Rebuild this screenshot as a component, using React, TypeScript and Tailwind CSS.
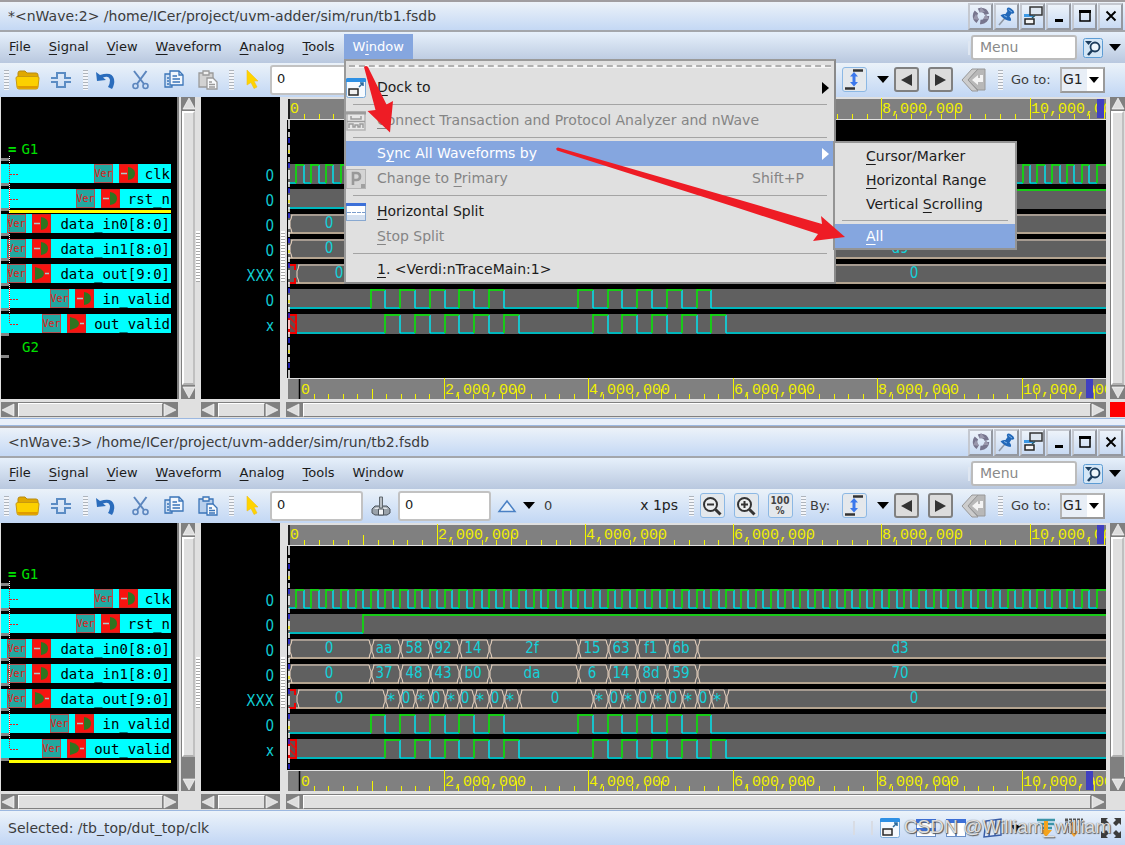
import React from "react";

/* ---------- signal data ---------- */

type Signal = { name: string; value: string; dir: "in" | "out"; wide?: boolean };

const SIGNALS: Signal[] = [
  { name: "clk", value: "0", dir: "in" },
  { name: "rst_n", value: "0", dir: "in" },
  { name: "data_in0[8:0]", value: "0", dir: "in", wide: true },
  { name: "data_in1[8:0]", value: "0", dir: "in", wide: true },
  { name: "data_out[9:0]", value: "XXX", dir: "out", wide: true },
  { name: "in_valid", value: "0", dir: "in" },
  { name: "out_valid", value: "x", dir: "out" },
];

const ROW = 25;
const HALF = 7.41;
/* x coordinate of the k-th half clock period */
const at = (k: number) => Math.round(2 + HALF * k);

const BUS_EDGES = [0, 11, 15, 19, 23, 27, 39, 43, 47, 51, 55];
const IN0 = ["0", "aa", "58", "92", "14", "2f", "15", "63", "f1", "6b", "d3"];
const OUT_EDGES = [1, 13, 15, 17, 19, 21, 23, 25, 27, 29, 31, 41, 43, 45, 47, 49, 51, 53, 55, 57, 59];
const OUT = ["0", "*", "0", "*", "0", "*", "0", "*", "0", "*", "0", "*", "0", "*", "0", "*", "0", "*", "0", "*", "0"];
const CLK = Array.from({ length: 109 }, (_, i) => i + 1);
const IN_VALID = [11, 13, 15, 17, 19, 21, 23, 25, 27, 29, 39, 41, 43, 45, 47, 49, 51, 53, 55, 57];
const OUT_VALID = IN_VALID.map((k) => k + 2);

/* Labels in this x range are skipped while the Window menu covers it. */
const isCovered = (x: number, covered?: boolean) => Boolean(covered) && x > 56 && x < 548;

/* ---------- wave drawing ---------- */

function Digital({ y, edges, start = 2 }: { y: number; edges: number[]; start?: number }) {
  let high = "";
  let low = "";
  let fall = "";
  let x = start;
  let level = 0;
  edges.forEach((k) => {
    const nx = at(k);
    if (level) {
      high += `M${x} ${y + 1}H${nx}`;
      fall += `M${nx} ${y + 1}V${y + 19}`;
    } else {
      low += `M${x} ${y + 19}H${nx}`;
      high += `M${nx} ${y + 19}V${y}`;
    }
    level = 1 - level;
    x = nx;
  });
  if (level) high += `M${x} ${y + 1}H4000`;
  else low += `M${x} ${y + 19}H4000`;
  return (
    <g fill="none" strokeWidth="1.5">
      <path d={low} stroke="#00b6bc" strokeWidth="2" />
      <path d={fall} stroke="#00e4ee" />
      <path d={high} stroke="#00ee00" />
    </g>
  );
}

function Bus({ y, edges, values, covered }: { y: number; edges: number[]; values: string[]; covered?: boolean }) {
  return (
    <g>
      {values.map((v, i) => {
        const last = i === values.length - 1;
        const x0 = at(edges[i]);
        const x1 = last ? 4000 : at(edges[i + 1]) - 1;
        const mid = Math.round(last ? (x0 + 815) / 2 : (x0 + x1) / 2 - 1);
        return (
          <g key={i}>
            <path d={`M${x0} ${y + 19}H${x1}`} stroke="#b4a490" strokeWidth="2" fill="none" />
            <path
              d={`M${x0 + 3} ${y + 1}L${x0 + 2} ${y + 5}L${x0 + 1} ${y + 7}V${y + 13}L${x0 + 2} ${y + 15}L${x0 + 3} ${y + 19}M${x0 + 2} ${y + 1}H${x1 - 1}L${x1} ${y + 5}L${x1 + 1} ${y + 7}V${y + 13}L${x1} ${y + 15}L${x1 - 1} ${y + 19}`}
              stroke="#ecd6c2"
              fill="none"
            />
            {!isCovered(mid, covered) && (
              <text
                x={mid}
                y={v === "*" ? y + 17 : y + 14}
                textAnchor="middle"
                fill="#14d2da"
                fontSize={v === "*" ? 18 : 15}
                fontFamily="'DejaVu Sans Condensed','Open Sans',sans-serif"
              >
                {v}
              </text>
            )}
          </g>
        );
      })}
    </g>
  );
}

function Waves({ top, in1Last, covered }: { top: number; in1Last: string; covered?: boolean }) {
  const y = (i: number) => top + i * ROW;
  const in1 = ["0", "37", "48", "43", "b0", "da", "6", "14", "8d", "59", in1Last];
  return (
    <svg className="block min-h-0 w-full flex-1 bg-black" role="img" aria-label="Waveforms">
      {SIGNALS.map((s, i) => (
        <rect key={s.name} x="1" y={y(i)} width="100%" height="20" fill="#606060" />
      ))}
      <Digital y={y(0)} edges={CLK} />
      <Digital y={y(1)} edges={[10]} />
      <Bus y={y(2)} edges={BUS_EDGES} values={IN0} covered={covered} />
      <Bus y={y(3)} edges={BUS_EDGES} values={in1} covered={covered} />
      <Bus y={y(4)} edges={OUT_EDGES} values={OUT} covered={covered} />
      <path
        d={`M2 ${y(4) + 1}H8V${y(4) + 6}M8 ${y(4) + 14}V${y(4) + 19}H2`}
        stroke="#f00000"
        strokeWidth="2"
        fill="none"
      />
      <Digital y={y(5)} edges={IN_VALID} />
      <Digital y={y(6)} edges={OUT_VALID} start={10} />
      <rect x="2" y={y(6) + 1} width="7" height="18" fill="#605050" stroke="#f00000" strokeWidth="2" />
      <path
        d={`M2 ${y(6) + 3}L9 ${y(6) + 10}M2 ${y(6) + 10}L9 ${y(6) + 17}`}
        stroke="#e01010"
        strokeWidth="1.5"
      />
      <g strokeWidth="1.5" fill="none">
        <path d="M2 0V2000" stroke="#ffffff" strokeDasharray="9 3 5 8" />
        <path d="M2 0V2000" stroke="#2020e0" strokeDasharray="5 20" strokeDashoffset="7" />
        <path d="M2 0V2000" stroke="#e8e000" strokeDasharray="3 47" strokeDashoffset="20" />
      </g>
    </svg>
  );
}

function Ruler({ place, covered }: { place: "top" | "bottom"; covered?: boolean }) {
  const isTop = place === "top";
  const start = isTop ? 2 : 12.5;
  const step = isTop ? 14.81 : 14.44;
  const base = isTop ? 22 : 21;
  const y0 = isTop ? 2 : 1;
  const ticks = Array.from({ length: 160 }, (_, i) => i);
  const labels = ["0", "2,000,000", "4,000,000", "6,000,000", "8,000,000", "10,000,000"];
  const block = isTop ? 810 : 799;
  return (
    <svg
      className={isTop ? "block h-[23px] w-full shrink-0" : "block h-[21px] w-full shrink-0"}
      role="img"
      aria-label="Time ruler"
    >
      <rect width="100%" height="100%" fill="#e0e0e0" />
      <rect x="1" y={y0} width="100%" height={base - y0} fill="#808080" />
      <g stroke="#f4f400" strokeWidth="1">
        {ticks.map((i) => {
          if (i === 0) return null;
          const x = Math.round(start + i * step) + 0.5;
          const h = i % 10 === 0 ? 21 : i % 5 === 0 ? 10 : 5;
          return <path key={i} d={`M${x} ${base - h}V${base}`} />;
        })}
      </g>
      <path d={`M${start} ${y0}V${base}`} stroke="#000" strokeWidth="1.5" />
      {labels.map((t, i) => {
        const x = Math.round(start + i * 10 * step) + 1;
        if (isCovered(x, covered)) return null;
        return (
          <text
            key={t}
            x={x}
            y={isTop ? 16 : 16}
            fill="#f0f000"
            fontSize="15"
            fontFamily="'Liberation Mono','DejaVu Sans Mono',monospace"
          >
            {t}
          </text>
        );
      })}
      <rect x={block} y={y0} width="7" height={base - y0 - 1} fill="#4040c0" />
    </svg>
  );
}

/* ---------- scroll bars ---------- */

function Arrow({ to }: { to: "up" | "down" | "left" | "right" }) {
  const d = {
    up: "M7 1L13 12H1Z",
    down: "M1 2H13L7 13Z",
    left: "M1 7L13 1V13Z",
    right: "M13 7L1 1V13Z",
  }[to];
  const horizontal = to === "left" || to === "right";
  return (
    <button
      type="button"
      aria-label={`Scroll ${to}`}
      className={horizontal ? "h-[14px] w-[15px] shrink-0 bg-[#808080]" : "h-[14px] w-[14px] shrink-0 bg-[#808080]"}
    >
      <svg className="block h-[14px] w-[14px]" viewBox="0 0 14 14">
        <path d={d} fill="#dedede" stroke="#fff" strokeWidth="0.6" />
      </svg>
    </button>
  );
}

function VScroll({ trough }: { trough?: boolean }) {
  return (
    <div className="flex w-[14px] shrink-0 flex-col border-l border-[#808080] bg-[#808080]">
      <Arrow to="up" />
      <div className="flex-1 border-2 border-t-white border-r-[#c0c0c0] border-b-[#b0b0b0] border-l-white bg-[#e0e0e0]" />
      {trough && <div className="h-[20px]" />}
      <Arrow to="down" />
    </div>
  );
}

function HScroll() {
  return (
    <div className="flex h-[15px] w-full border-t border-[#808080] bg-[#808080]">
      <Arrow to="left" />
      <div className="ml-[2px] flex-1 border border-t-white border-r-[#808080] border-b-[#808080] border-l-white bg-[#e0e0e0]" />
      <Arrow to="right" />
    </div>
  );
}

function Splitter({ className }: { className: string }) {
  return (
    <div className={`flex shrink-0 items-start bg-[#e0e0e0] pl-px pt-[134px] ${className}`}>
      <div className="h-[51px] w-[4px] bg-[repeating-linear-gradient(180deg,#ffffff_0px,#ffffff_2px,#a8a8a8_2px,#a8a8a8_3px)]" />
    </div>
  );
}

/* ---------- signal list ---------- */

function DirIcon({ dir }: { dir: "in" | "out" }) {
  return (
    <svg className="h-[19px] w-[19px] shrink-0" viewBox="0 0 19 19">
      <rect width="19" height="19" fill="#f81410" />
      <rect x="0.5" y="0.5" width="18" height="18" fill="none" stroke="#a83030" strokeDasharray="1 1" />
      {dir === "in" ? (
        <>
          <path d="M9 3Q16 4 16 9.5T9 16Z" fill="#2f7420" />
          <path d="M2 9.500H8" stroke="#b0c8c8" strokeWidth="1.500" />
        </>
      ) : (
        <>
          <path d="M3 3Q12 5 12 9.5T3 16Z" fill="#2f7420" />
          <path d="M13 9.500H17" stroke="#b0c8c8" strokeWidth="1.500" />
        </>
      )}
    </svg>
  );
}

function SignalRow({ s, marked }: { s: Signal; marked: boolean }) {
  return (
    <li className="h-[25px]">
      <div className="mr-[6px] flex h-[19px] items-center justify-end gap-[6px] overflow-hidden bg-[#00ffff] pr-px">
        <span className="flex h-[19px] w-[19px] shrink-0 items-center justify-center border border-[#b05050] bg-[#22a8a0] font-['DejaVu_Sans_Mono',monospace] text-[10px] leading-none text-[#e01818]">
          Ver
        </span>
        <DirIcon dir={s.dir} />
        <span
          className="shrink-0 whitespace-nowrap text-right font-['DejaVu_Sans_Mono',monospace] text-[14px] leading-[18px] text-black"
          style={{ width: Math.round(s.name.length * 8.7) }}
        >
          {s.name}
        </span>
      </div>
      {marked && <div className="mr-[6px] ml-[8px] mt-[2px] h-[3px] bg-[#ffff00]" />}
    </li>
  );
}

function SignalPane({ headClass, top, mark, group2 }: { headClass: string; top: number; mark: number; group2?: boolean }) {
  const stubs = Array.from({ length: 8 }, (_, i) => top - 6 + i * ROW);
  return (
    <div className="relative ml-px w-[176px] shrink-0 overflow-hidden bg-black font-['DejaVu_Sans_Mono',monospace] text-[14px] leading-[17px] text-[#00e000]">
      <div className={`flex items-end gap-[5px] pb-[6px] pl-[7px] ${headClass}`}>
        <span className="font-bold">=</span>
        <span>G1</span>
      </div>
      <ul>
        {SIGNALS.map((s, i) => (
          <SignalRow key={s.name} s={s} marked={i === mark} />
        ))}
      </ul>
      {group2 && <div className="pl-[21px]">G2</div>}
      <svg className="pointer-events-none absolute inset-0 h-full w-full">
        {stubs.map((y) => (
          <rect key={y} x="0" y={y} width="8" height="3" fill="#888" />
        ))}
        {group2 && <rect x="0" y={top + 191} width="8" height="3" fill="#888" />}
        <path d={`M8.5 ${top - 8}V${top + 160}`} stroke="#fff" strokeDasharray="1 1" />
        {SIGNALS.map((s, i) => {
          const y = top + i * ROW;
          return (
            <g key={s.name} stroke="#e02020" strokeDasharray="1 1">
              <path d={`M8.5 ${y}V${i === 6 ? y + 10 : y + 19}`} />
              {!s.wide && <path d={`M9 ${y + 10.5}H17`} strokeDasharray="2 1" />}
            </g>
          );
        })}
      </svg>
    </div>
  );
}

/* ---------- icons ---------- */

const Caret = () => (
  <svg className="h-[7px] w-[12px] shrink-0" viewBox="0 0 12 7">
    <path d="M0 0H12L6 7Z" fill="#000" />
  </svg>
);

const Grip = () => (
  <span className="h-[20px] w-[5px] bg-[repeating-linear-gradient(180deg,#aeb4bc_0px,#aeb4bc_1px,#f4f6fa_1px,#f4f6fa_3px)]" />
);

const FolderIcon = () => (
  <svg className="h-[20px] w-[25px]" viewBox="0 0 25 20">
    <path d="M3 3Q3 1 5 1H10L12 3H21Q23 3 23 5V8H3Z" fill="#e0a800" stroke="#b88a10" />
    <path d="M1 8Q1 6.500 3 6.500H22Q24 6.500 24 8L23 17Q23 19 21 19H4Q2 19 2 17Z" fill="#fcd000" stroke="#c89a10" />
    <path d="M2 16H23L22 18.500H4Z" fill="#e09c00" />
  </svg>
);

const PulseIcon = () => (
  <svg className="h-[18px] w-[22px]" viewBox="0 0 22 18" fill="none" stroke="#5b8cc4" strokeWidth="2">
    <path d="M1 7H7V2H15V7H21" />
    <path d="M1 11H7V16H15V11H21" />
  </svg>
);

const UndoIcon = () => (
  <svg className="h-[18px] w-[20px]" viewBox="0 0 20 18">
    <path d="M0 1L1 10L10 9L7 6.500Q13 4 14 9Q14 13 12 16L16 18Q19 13 18 8Q16 0 4 4Z" fill="#2a6cbc" />
  </svg>
);

const ScissorsIcon = () => (
  <svg className="h-[20px] w-[17px]" viewBox="0 0 17 20" fill="none" stroke="#5c86be" strokeWidth="2">
    <path d="M2 1L12 14M14.500 1L5 14" />
    <circle cx="3.500" cy="16" r="2.500" strokeWidth="1.600" />
    <circle cx="13.500" cy="16" r="2.500" strokeWidth="1.600" />
  </svg>
);

const CopyIcon = () => (
  <svg className="h-[20px] w-[20px]" viewBox="0 0 20 20" stroke="#3a74b8" strokeWidth="1.300">
    <path d="M1 4H8V17H1Z" fill="#cfe0f4" />
    <path d="M6 1H15L19 5V15H6Z" fill="#f2f7fd" />
    <path d="M8.500 6H13M8.500 9H16M8.500 12H16M3 8H5M3 11H5M3 14H5" />
    <path d="M15 1V5H19" fill="none" />
  </svg>
);

const PasteIcon = ({ off }: { off?: boolean }) => (
  <svg className="h-[20px] w-[20px]" viewBox="0 0 20 20" stroke={off ? "#9a9a9a" : "#3a74b8"} strokeWidth="1.300">
    <path d="M1 3H15V17H1Z" fill={off ? "#d2d2d2" : "#b8cfec"} />
    <path d="M5 1H11V5H5Z" fill="#f0f0f0" />
    <path d="M9 8H15L19 12V19H9Z" fill="#f8fafc" />
    <path d="M11 12H14M11 14.500H17M11 17H17" />
  </svg>
);

const PointerIcon = () => (
  <svg className="h-[19px] w-[13px]" viewBox="0 0 13 19">
    <path d="M1 0L12 11H8L11 17L8 18.500L5 12.500L1 15Z" fill="#ffd400" stroke="#f0c020" strokeWidth="0.600" />
  </svg>
);

const MarkerIcon = () => (
  <svg className="h-[20px] w-[20px]" viewBox="0 0 20 20">
    <path d="M1 13L4 10H16L19 13V17L16 19H4L1 17Z" fill="#9aa2aa" stroke="#4c545c" />
    <path d="M3 13L5 11.500H15L17 13Z" fill="#e2e6ea" />
    <path d="M8.500 1H11.500V12H8.500Z" fill="#b8bec4" stroke="#60686e" />
    <path d="M7.500 13H12.500V19H7.500Z" fill="#f2f4f6" stroke="#4c545c" />
  </svg>
);

const TriangleIcon = () => (
  <svg className="h-[14px] w-[20px]" viewBox="0 0 20 14">
    <path d="M10 2L18 12.500H2Z" fill="#eaf2fb" stroke="#4a80c4" strokeWidth="1.500" />
  </svg>
);

const ZoomIcon = ({ plus }: { plus?: boolean }) => (
  <svg className="h-[20px] w-[20px]" viewBox="0 0 20 20" fill="none" stroke="#333">
    <circle cx="8.500" cy="8.500" r="6.500" strokeWidth="2" fill="#eceef0" />
    <path d="M13.500 13.500L18.500 18.500" strokeWidth="3" />
    <path d={plus ? "M5 8.500H12M8.500 5V12" : "M5 8.500H12"} strokeWidth="2" />
  </svg>
);

const EdgeIcon = () => (
  <svg className="h-[21px] w-[20px]" viewBox="0 0 20 21">
    <path d="M9 1.500H19M1 19.500H11" stroke="#333" strokeWidth="2.600" />
    <path d="M10 3L14 7.500H11.500V13H14L10 17.500L6 13H8.500V7.500H6Z" fill="#3c78ec" />
  </svg>
);

const BackIcon = () => (
  <svg className="h-[24px] w-[26px]" viewBox="0 0 26 24" fill="#cccccc" stroke="#989898">
    <path d="M11 1H17L7 12L17 23H11L1 12Z" />
    <path d="M17 1H24V22H17L7 12Z" fill="#b8b8b8" />
    <path d="M22 7V14H17V17L11 12L17 7V10H19V7Z" fill="#f4f4f4" stroke="none" />
  </svg>
);

const RecycleIcon = () => (
  <svg className="h-[18px] w-[18px]" viewBox="0 0 18 18">
    <circle cx="9" cy="9" r="6" fill="none" stroke="#77758e" strokeWidth="4.500" strokeDasharray="10 2.560" />
    <path d="M9 0L13 5H7ZM17 12L11 12L14 7ZM1 12L4 7L7 13Z" fill="#9997ac" />
  </svg>
);

const PinIcon = () => (
  <svg className="h-[19px] w-[17px]" viewBox="0 0 17 19">
    <path d="M7 11L1 18" stroke="#9098a4" strokeWidth="1.600" />
    <path d="M9 1.500Q10 -0.500 13 1.500Q17 4 16 6Q15 7 13.500 6.500L11.500 9.500Q14 12 12.500 14Q7 13.500 2.500 8.500Q4 6.500 7.500 7L9.500 4Q8.500 3 9 1.500Z" fill="#2268b8" />
    <path d="M10.500 2.500L14 5M6 8.500L9 10" stroke="#80b4ec" />
  </svg>
);

const DockIcon = () => (
  <svg className="h-[20px] w-[20px]" viewBox="0 0 20 20">
    <rect x="0.500" y="0.500" width="19" height="19" rx="2" fill="#f6fafe" stroke="#7aaad8" />
    <path d="M0 1Q0 0 2 0H18Q20 0 20 1V4H0Z" fill="#2e90e4" />
    <rect x="3" y="11" width="9" height="6" fill="#f0f0f0" stroke="#282828" strokeWidth="1.500" />
    <path d="M13 9L17 5M17 8V5H14" stroke="#2a6a9c" strokeWidth="1.500" fill="none" />
  </svg>
);

const UndockIcon = () => (
  <svg className="h-[20px] w-[20px]" viewBox="0 0 20 20">
    <rect x="1" y="8" width="12" height="11" fill="#dceaf8" />
    <path d="M1 8H10V11H1Z" fill="#3c98e4" />
    <rect x="2" y="13" width="9" height="5" fill="#f4f4f4" stroke="#222" strokeWidth="1.500" />
    <rect x="7" y="1" width="12" height="8" fill="#dde6f0" stroke="#333" strokeWidth="1.500" />
    <path d="M9 12L12 9.500" stroke="#256" strokeWidth="1.500" />
  </svg>
);

const SplitIcon = () => (
  <svg className="h-[20px] w-[20px]" viewBox="0 0 20 20">
    <rect x="0.500" y="1.500" width="19" height="17" fill="#fdfeff" stroke="#88a8d0" />
    <path d="M0 1H20V4H0Z" fill="#3c70d8" />
    <path d="M1 13H19V18H1Z" fill="#d4e0f0" />
    <path d="M1 10.500H19" stroke="#7a9ccc" strokeDasharray="4 1" />
  </svg>
);

const LinkIcon = () => (
  <svg className="h-[20px] w-[20px]" viewBox="0 0 20 20" fill="#e8e8e8" stroke="#9c9c9c" strokeWidth="1.500">
    <rect x="1" y="1" width="18" height="18" stroke="#b4b4b4" />
    <path d="M0 2H20" strokeWidth="3" />
    <path d="M5 5V8H15V5" fill="none" />
    <path d="M1 10.500H19" />
    <path d="M3 17V13H7V16H9V14H12V16H14V13H17V17" fill="none" />
  </svg>
);

const PrimaryIcon = () => (
  <svg className="h-[20px] w-[20px]" viewBox="0 0 20 20">
    <rect x="0.500" y="0.500" width="19" height="19" fill="#d4d4d4" stroke="#b4b4b4" />
    <path d="M7 16V4H10.500Q14 4 14 7.500T10.500 11H7" fill="none" stroke="#989898" strokeWidth="2.600" />
    <rect x="15" y="15" width="4" height="4" fill="#a0a0a0" />
  </svg>
);

const FindIcon = () => (
  <svg className="h-[20px] w-[20px]" viewBox="0 0 20 20">
    <rect x="0.500" y="0.500" width="19" height="19" rx="2" fill="#d4e6f6" stroke="#5c9cd4" />
    <path d="M2 3H9L5.500 7Z" fill="#1c3c5c" />
    <circle cx="12" cy="9" r="4.500" fill="#eef6fc" stroke="#1c3c5c" strokeWidth="1.800" />
    <path d="M9 12.500L5 17" stroke="#1c3c5c" strokeWidth="2.600" />
  </svg>
);

/* ---------- window chrome ---------- */

function TitleButton({ label, children }: { label: string; children: React.ReactNode }) {
  return (
    <button
      type="button"
      aria-label={label}
      className="flex h-[27px] w-[25px] items-center justify-center border-2 border-t-[#c4c8d0] border-r-[#9498a0] border-b-[#9498a0] border-l-[#c4c8d0] bg-linear-to-b from-[#edf3fa] to-[#c8daf3]"
    >
      {children}
    </button>
  );
}

function TitleBar({ title }: { title: string }) {
  return (
    <header className="flex h-[32px] items-center justify-between border-t-2 border-b-2 border-t-[#a09da0] border-b-[#a3a6ab] bg-linear-to-b from-[#ecf2f9] to-[#c4d8f4] pr-[2px] pl-[8px]">
      <h1 className="text-[14px] text-[#3c3c3c]">{title}</h1>
      <div className="flex gap-px">
        <TitleButton label="Reload"><RecycleIcon /></TitleButton>
        <TitleButton label="Pin"><PinIcon /></TitleButton>
        <TitleButton label="Undock"><UndockIcon /></TitleButton>
        <TitleButton label="Minimize">
          <svg className="h-[14px] w-[12px]" viewBox="0 0 12 14"><path d="M2 11.500H10" stroke="#000" strokeWidth="3" /></svg>
        </TitleButton>
        <TitleButton label="Maximize">
          <svg className="h-[12px] w-[12px]" viewBox="0 0 12 12"><path d="M1 1.500H11V11H1Z" fill="none" stroke="#000" strokeWidth="1.500" /><path d="M0 1.500H12" stroke="#000" strokeWidth="3" /></svg>
        </TitleButton>
        <TitleButton label="Close">
          <svg className="h-[12px] w-[12px]" viewBox="0 0 12 12"><path d="M1.500 1.500L10.500 10.500M10.500 1.500L1.500 10.500" stroke="#000" strokeWidth="1.900" /></svg>
        </TitleButton>
      </div>
    </header>
  );
}

/* Label with the character at position `at` underlined. */
function Mnemonic({ text, at: pos = 0 }: { text: string; at?: number }) {
  return (
    <span className="whitespace-pre">
      {text.slice(0, pos)}
      <u className="underline-offset-[3px]">{text[pos]}</u>
      {text.slice(pos + 1)}
    </span>
  );
}

function MenuBar({ id, open }: { id: string; open?: boolean }) {
  const items: [string, number][] = [
    ["File", 0], ["Signal", 0], ["View", 0], ["Waveform", 0], ["Analog", 0], ["Tools", 0], ["Window", 1],
  ];
  return (
    <nav className="flex h-[31px] items-center bg-linear-to-b from-[#e6f0fb] to-[#b9c8df] pr-[4px]">
      {items.map(([t, n]) => (
        <button
          key={t}
          type="button"
          className={
            open && t === "Window"
              ? "mb-[3px] h-[26px] self-end bg-[#85a6df] px-[9px] text-[13px] text-white"
              : "mb-[3px] h-[26px] self-end px-[9px] text-[13px] text-[#1c1c1c]"
          }
        >
          <Mnemonic text={t} at={n} />
        </button>
      ))}
      <span className="mr-px ml-auto h-[14px] w-[2px] bg-[#dfe7f2]" />
      <input
        id={`menu-search-${id}`}
        aria-label="Menu search"
        placeholder="Menu"
        className="h-[25px] w-[106px] rounded-[3px] border-2 border-[#bcbcbc] bg-white px-[7px] pb-[2px] text-[14px] placeholder:text-[#8a8a8a]"
      />
      <button type="button" aria-label="Find" className="mx-[6px]"><FindIcon /></button>
      <Caret />
    </nav>
  );
}

const slot = "flex h-full shrink-0 items-center justify-center";

function Tool({ w, label, boxed, children }: { w: string; label: string; boxed?: "blue" | "gray"; children: React.ReactNode }) {
  const box =
    boxed === "blue"
      ? "flex h-[25px] w-[25px] items-center justify-center rounded-[3px] border border-[#8cb8e4] bg-[#e4e8ec]"
      : boxed === "gray"
        ? "flex h-[25px] w-[25px] items-center justify-center rounded-[3px] border-2 border-[#808080] bg-[#dcdcdc]"
        : "flex items-center justify-center";
  return (
    <span className={`${slot} ${w}`}>
      <button type="button" aria-label={label} className={box}>{children}</button>
    </span>
  );
}

function ToolBar({ id, pasteOff }: { id: string; pasteOff?: boolean }) {
  const field = "h-[30px] w-[93px] shrink-0 rounded-[3px] border-2 border-[#c2c2c2] bg-white px-[5px] pb-[3px] text-[13px] text-[#222]";
  return (
    <div className="flex h-[34px] items-center overflow-hidden bg-linear-to-b from-[#ebf2f9] to-[#c2d7f4] pb-px text-[13px] text-[#3c3c3c]">
      <span className={`${slot} w-[12px]`}><Grip /></span>
      <Tool w="w-[30px]" label="Open"><FolderIcon /></Tool>
      <Tool w="w-[38px]" label="Get signals"><PulseIcon /></Tool>
      <span className={`${slot} w-[10px]`}><Grip /></span>
      <Tool w="w-[32px]" label="Undo"><UndoIcon /></Tool>
      <Tool w="w-[36px]" label="Cut"><ScissorsIcon /></Tool>
      <Tool w="w-[32px]" label="Copy"><CopyIcon /></Tool>
      <Tool w="w-[35px]" label="Paste"><PasteIcon off={pasteOff} /></Tool>
      <span className={`${slot} w-[13px]`}><Grip /></span>
      <Tool w="w-[28px]" label="Cursor"><PointerIcon /></Tool>
      <input id={`cursor-${id}`} aria-label="Cursor time" defaultValue="0" className={`ml-[4px] ${field}`} />
      <Tool w="w-[35px]" label="Marker"><MarkerIcon /></Tool>
      <input id={`marker-${id}`} aria-label="Marker time" defaultValue="0" className={field} />
      <Tool w="w-[32px]" label="Delta"><TriangleIcon /></Tool>
      <Caret />
      <span className="flex w-[143px] shrink-0 items-center justify-between pl-[9px]">
        <span>0</span>
        <span className="text-[14px] text-[#222]">x 1ps</span>
      </span>
      <span className={`${slot} w-[21px] pl-[5px]`}><Grip /></span>
      <Tool w="w-[26px]" label="Zoom out" boxed="blue"><ZoomIcon /></Tool>
      <Tool w="w-[42px]" label="Zoom in" boxed="blue"><ZoomIcon plus /></Tool>
      <Tool w="w-[26px]" label="Zoom all" boxed="blue">
        <span className="font-['DejaVu_Sans_Condensed',sans-serif] text-[10px] leading-[10px] font-bold text-[#444]">100<br />%</span>
      </Tool>
      <span className={`${slot} w-[16px] pl-[4px]`}><Grip /></span>
      <span className="w-[32px] shrink-0 pl-px">By:</span>
      <Tool w="w-[26px]" label="Search by edge" boxed="blue"><EdgeIcon /></Tool>
      <span className={`${slot} w-[27px] pl-[4px]`}><Caret /></span>
      <Tool w="w-[25px]" label="Previous" boxed="gray">
        <svg className="h-[12px] w-[11px]" viewBox="0 0 11 12"><path d="M11 0V12L0 6Z" fill="#333" /></svg>
      </Tool>
      <Tool w="w-[43px]" label="Next" boxed="gray">
        <svg className="h-[12px] w-[11px]" viewBox="0 0 11 12"><path d="M0 0V12L11 6Z" fill="#333" /></svg>
      </Tool>
      <Tool w="w-[24px]" label="Back"><BackIcon /></Tool>
      <span className={`${slot} w-[24px] pl-[4px]`}><Grip /></span>
      <label htmlFor={`goto-${id}`} className="w-[50px] shrink-0 pl-px whitespace-nowrap">Go to:</label>
      <div className="relative h-[26px] w-[45px] shrink-0">
        <select
          id={`goto-${id}`}
          className="h-full w-full appearance-none border-2 border-t-[#b4b4b4] border-r-[#9a9a9a] border-b-[#9a9a9a] border-l-[#b4b4b4] bg-linear-to-r from-[#e8eef6] from-60% to-white to-60% pl-px text-[14px] text-[#222]"
        >
          <option>G1</option>
        </select>
        <svg className="pointer-events-none absolute top-[10px] right-[6px] h-[6px] w-[10px]" viewBox="0 0 10 6">
          <path d="M0 0H10L5 6Z" fill="#000" />
        </svg>
      </div>
    </div>
  );
}

type WaveWindowProps = {
  id: string;
  title: string;
  menuOpen?: boolean;
  bodyClass: string;
  headClass: string;
  valueClass: string;
  top: number;
  mark: number;
  group2?: boolean;
  trough?: boolean;
  in1Last: string;
};

function WaveWindow(p: WaveWindowProps) {
  return (
    <section className={p.trough ? "flex flex-1 flex-col" : "flex flex-col"}>
      <TitleBar title={p.title} />
      <MenuBar id={p.id} open={p.menuOpen} />
      <ToolBar id={p.id} pasteOff={p.menuOpen} />
      <div className={`flex bg-[#e0e0e0] ${p.bodyClass}`}>
        <SignalPane headClass={p.headClass} top={p.top} mark={p.mark} group2={p.group2} />
        <div className="w-[4px] shrink-0 border-l-2 border-[#808080]" />
        <VScroll trough={p.trough} />
        <Splitter className="w-[6px]" />
        <ul className={`w-[79px] shrink-0 bg-black pr-[6px] text-right font-['DejaVu_Sans_Condensed','Open_Sans',sans-serif] text-[15px] text-[#10cdd4] ${p.valueClass}`}>
          {SIGNALS.map((s) => (
            <li key={s.name} className="h-[25px] pt-[2px] leading-[20px]">{s.value}</li>
          ))}
        </ul>
        <Splitter className="w-[7px]" />
        <div className="flex min-w-0 flex-1 flex-col overflow-hidden">
          <Ruler place="top" covered={p.menuOpen} />
          <Waves top={p.top - 23} in1Last={p.in1Last} covered={p.menuOpen} />
          <Ruler place="bottom" />
        </div>
        <div className="w-[4px] shrink-0" />
        <VScroll trough={p.trough} />
        <div className="w-px shrink-0" />
      </div>
      <div className="flex h-[19px] items-end bg-[#e0e0e0] pb-px">
        <div className="ml-px w-[177px] shrink-0"><HScroll /></div>
        <div className="ml-[23px] w-[79px] shrink-0"><HScroll /></div>
        <div className="ml-[6px] min-w-0 flex-1"><HScroll /></div>
        <div className={p.trough ? "ml-[4px] h-[15px] w-[15px] shrink-0" : "ml-[4px] h-[15px] w-[15px] shrink-0 bg-[#ff0000]"} />
      </div>
    </section>
  );
}

/* ---------- drop-down menus ---------- */

type ItemProps = { text: string; at?: number; icon?: React.ReactNode; off?: boolean; active?: boolean; sub?: boolean; hint?: string };

function Item({ text, at: pos, icon, off, active, sub, hint }: ItemProps) {
  const tone = active ? "bg-[#85a6df] text-white" : off ? "text-[#858585]" : "text-[#1c1c1c]";
  return (
    <li>
      <button type="button" role="menuitem" disabled={off} className={`flex h-[25px] w-full items-center pr-[5px] text-left text-[14px] ${tone}`}>
        <span className="w-[31px] shrink-0">{icon}</span>
        <Mnemonic text={text} at={pos} />
        {hint && <span className="mr-[25px] ml-auto">{hint}</span>}
        {sub && (
          <svg className="ml-auto h-[12px] w-[7px]" viewBox="0 0 7 12">
            <path d="M0 0L7 6L0 12Z" fill={active ? "#fff" : "#000"} />
          </svg>
        )}
      </button>
    </li>
  );
}

const Rule = () => (
  <li role="separator" className="flex h-[8px] items-center px-[7px]">
    <span className="h-px w-full bg-[#a4a4a4]" />
  </li>
);

function WindowMenu() {
  return (
    <ul role="menu" className="absolute top-[59px] left-[344px] w-[492px] border-2 border-t-[#9a9a9a] border-r-[#8a8a8a] border-b-[#8a8a8a] border-l-[#9a9a9a] bg-[#e0e0e0]">
      <li role="separator" className="h-[14px] px-[3px] pt-[4px]">
        <div className="h-[3px] border-t-2 border-dashed border-[#b0b0b0] bg-[#f6f6f6]" />
      </li>
      <Item text="Dock to" icon={<DockIcon />} sub />
      <Rule />
      <Item text="Connect Transaction and Protocol Analyzer and nWave" icon={<LinkIcon />} off />
      <Rule />
      <Item text="Sync All Waveforms by" at={1} active sub />
      <Item text="Change to Primary" at={10} icon={<PrimaryIcon />} off hint="Shift+P" />
      <Rule />
      <Item text="Horizontal Split" icon={<SplitIcon />} />
      <Item text="Stop Split" off />
      <Rule />
      <Item text="1. <Verdi:nTraceMain:1>" />
    </ul>
  );
}

function SyncMenu() {
  const row = "flex h-[24px] w-full items-center pl-[31px] text-[14px]";
  return (
    <ul role="menu" className="absolute top-[141px] left-[833px] w-[184px] border-2 border-[#949494] bg-[#e0e0e0] pt-px">
      <li><button type="button" role="menuitem" className={`${row} text-[#1c1c1c]`}><Mnemonic text="Cursor/Marker" /></button></li>
      <li><button type="button" role="menuitem" className={`${row} text-[#1c1c1c]`}><Mnemonic text="Horizontal Range" /></button></li>
      <li><button type="button" role="menuitem" className={`${row} text-[#1c1c1c]`}><Mnemonic text="Vertical Scrolling" at={9} /></button></li>
      <Rule />
      <li><button type="button" role="menuitem" className={`${row} bg-[#85a6df] text-white`}><Mnemonic text="All" /></button></li>
    </ul>
  );
}

/* ---------- status bar ---------- */

function StatusBar() {
  const bar = "h-[14px] w-[2px] shrink-0 bg-[#d8dce4]";
  return (
    <footer className="flex h-[35px] items-center border-t border-[#9cb8e0] bg-linear-to-b from-[#ecf3fa] to-[#c2d6f4] pr-[4px] pl-[8px] text-[14px] text-[#3c3c3c]">
      <span>Selected: /tb_top/dut_top/clk</span>
      <span className={`ml-auto ${bar}`} />
      <span className={`mr-[7px] ml-[16px] ${bar}`} />
      <div className="flex shrink-0 items-center">
        <button type="button" aria-label="Dock" className="mr-[16px]"><DockIcon /></button>
        <button type="button" aria-label="Split rows" className="mr-[10px]">
          <svg className="h-[20px] w-[20px]" viewBox="0 0 20 20"><rect x="0.500" y="1.500" width="19" height="17" fill="#fff" stroke="#6c90c8" /><path d="M0 1H20V5H0ZM0 10H20V13H0Z" fill="#3c70d8" /></svg>
        </button>
        <button type="button" aria-label="Split columns" className="mr-[17px]">
          <svg className="h-[20px] w-[20px]" viewBox="0 0 20 20"><rect x="0.500" y="1.500" width="19" height="17" fill="#fff" stroke="#6c90c8" /><path d="M0 1H20V5H0Z" fill="#3c70d8" /><path d="M10 4V18" stroke="#6c90c8" strokeWidth="2" /></svg>
        </button>
        <button type="button" aria-label="Cascade" className="mr-[7px]">
          <svg className="h-[20px] w-[20px]" viewBox="0 0 20 20"><path d="M3 3L18 1V17L1 19Z" fill="#dfe9f6" stroke="#3a5ea8" strokeWidth="1.500" /><path d="M8 3L6 18M13 2L12 17" stroke="#3a5ea8" strokeWidth="1.500" /></svg>
        </button>
        <span className="mr-[14px] flex"><Caret /></span>
        <button type="button" aria-label="Load" className="mr-[8px]">
          <svg className="h-[20px] w-[20px]" viewBox="0 0 20 20"><path d="M1 2H19M2 6H18M4 10H16" stroke="#3c94a8" strokeWidth="2.500" /><path d="M8 3H12V12H16L10 19L4 12H8Z" fill="#f4a31c" /></svg>
        </button>
        <button type="button" aria-label="Step" className="mr-[17px]">
          <svg className="h-[20px] w-[20px]" viewBox="0 0 20 20"><path d="M1 2H19M1 6H19" stroke="#555" strokeWidth="3" strokeDasharray="3 1" /><path d="M5 8V15M15 8V15" stroke="#886030" strokeWidth="2" /><path d="M8 4H12V13H15L10 19L5 13H8Z" fill="#f0a030" /></svg>
        </button>
        <button type="button" aria-label="Full screen">
          <svg className="h-[20px] w-[20px]" viewBox="0 0 20 20" fill="#3c3c3c"><path d="M0 0H7L5 2L8 5L5 8L2 5L0 7ZM20 0V7L18 5L15 8L12 5L15 2L13 0ZM0 20V13L2 15L5 12L8 15L5 18L7 20ZM20 20H13L15 18L12 15L15 12L18 15L20 13Z" /></svg>
        </button>
      </div>
    </footer>
  );
}

export default function App() {
  return (
    <div className="relative flex min-h-screen flex-col overflow-hidden bg-[#e9f0fa] font-['DejaVu_Sans',sans-serif]">
      <WaveWindow
        id="tb1"
        title="*<nWave:2> /home/ICer/project/uvm-adder/sim/run/tb1.fsdb"
        menuOpen
        bodyClass="h-[302px]"
        headClass="h-[67px]"
        valueClass="pt-[67px]"
        top={67}
        mark={1}
        group2
        in1Last="d9"
      />
      <div className="h-[8px] border-t border-b border-[#9cb8e0]" />
      <WaveWindow
        id="tb2"
        title="<nWave:3> /home/ICer/project/uvm-adder/sim/run/tb2.fsdb"
        bodyClass="min-h-[268px] flex-1"
        headClass="h-[66px]"
        valueClass="pt-[66px]"
        top={66}
        mark={6}
        trough
        in1Last="70"
      />
      <StatusBar />
      <WindowMenu />
      <SyncMenu />
      <svg className="pointer-events-none absolute top-0 left-0 h-[300px] w-[900px]" viewBox="0 0 900 300" fill="#ee1c25">
        <path d="M364 67Q366 65 368 67L386.500 104.500L393 101L390 132.500L367.500 111L375.500 110Z" />
        <path d="M558 147.500L740 200L822 224L821 216L845 237L813 241L818 234L735 207L557 150.500Q555 148 558 147.500Z" />
      </svg>
      <p className="pointer-events-none absolute right-[14px] bottom-[4px] font-['Liberation_Sans',sans-serif] text-[19px] leading-[28px] text-white/80 [text-shadow:1px_1px_1px_#555,0_0_1px_#555]">
        CSDN @William_william
      </p>
    </div>
  );
}
